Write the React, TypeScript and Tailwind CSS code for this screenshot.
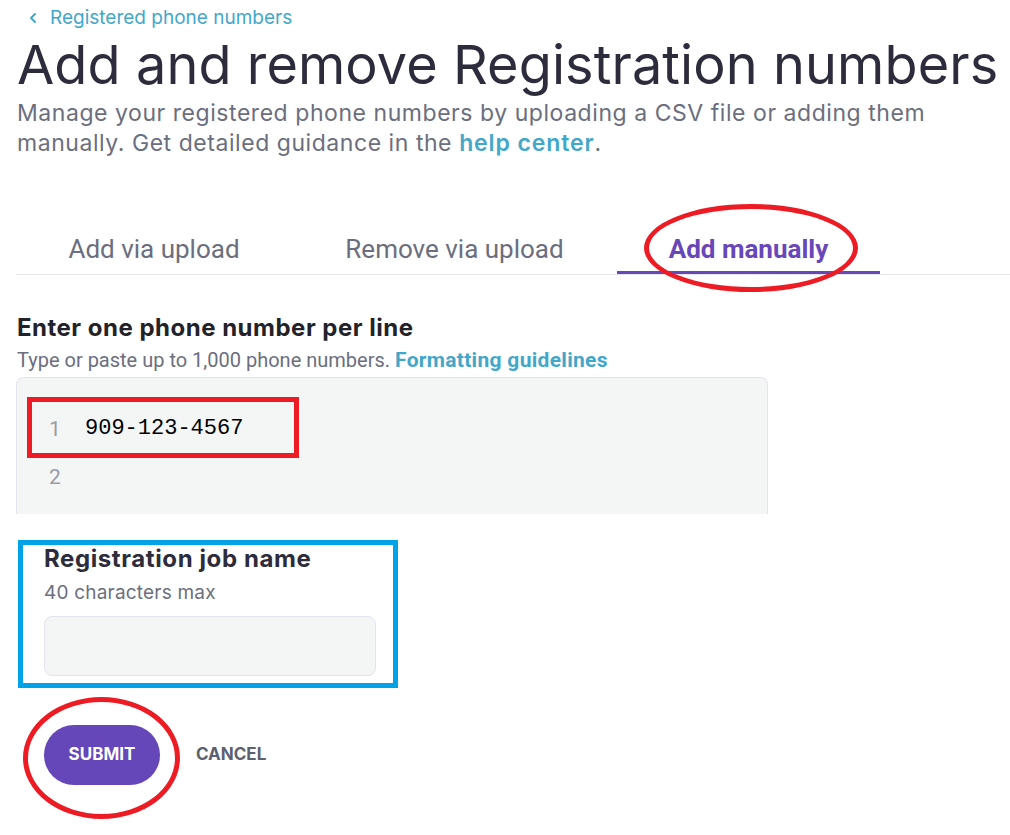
import { ChevronLeft } from "lucide-react";

const sans = "font-['Inter','Noto_Sans',sans-serif]";
const narrow = "font-['Roboto','Liberation_Sans',sans-serif]";

export default function App() {
  return (
    <div className={`relative w-[1010px] h-[835px] bg-white overflow-hidden ${sans}`}>
      <div className="pl-[17px] pt-[6px]">
        {/* breadcrumb */}
        <a className="flex items-center gap-[9px] text-[19px] leading-[24px] text-[#43a7c9]">
          <ChevronLeft className="w-[16px] h-[16px] ml-[8px]" strokeWidth={3} />
          <span>Registered phone numbers</span>
        </a>

        <h1 className="mt-[4px] text-[54px] leading-[62px] text-[#2c2c3c] tracking-[0.1px]">
          Add and remove Registration numbers
        </h1>
        <p className="mt-[2px] text-[23px] leading-[30px] text-[#6b6e7e] tracking-[0.55px]">
          Manage your registered phone numbers by uploading a CSV file or adding them
          <br />
          manually. Get detailed guidance in the{" "}
          <span className="font-semibold text-[#43a7c9] tracking-[0.9px]">help center</span>.
        </p>
      </div>

      {/* tabs */}
      <div className={`mt-[66px] ml-[16px] flex border-b border-[#e4e4ec] text-[26px] ${narrow}`}>
        <div className="w-[276px] h-[50px] flex items-center justify-center text-[#6b6e7e]">
          Add via upload
        </div>
        <div className="w-[325px] h-[50px] flex items-center justify-center text-[#6b6e7e]">
          Remove via upload
        </div>
        <div className="w-[263px] h-[50px] flex items-center justify-center font-bold text-[#6847b9] border-b-[3px] border-[#6847b9] -mb-px pt-[3px]">
          Add manually
        </div>
      </div>

      <div className="pl-[17px] pt-[39px]">
        <h2 className="text-[24px] leading-[28px] font-bold text-[#222228] tracking-[0.5px]">
          Enter one phone number per line
        </h2>
        <p className={`mt-[6px] text-[20px] leading-[24px] text-[#6b6e7e] ${narrow}`}>
          Type or paste up to 1,000 phone numbers.{" "}
          <span className="font-bold text-[#43a7c9] text-[21px] tracking-[0.3px]">Formatting guidelines</span>
        </p>

        <div className="mt-[5px] w-[752px] h-[137px] -ml-px bg-[#f4f5f5] border border-b-0 border-[#e2e3ec] rounded-t-[8px] pt-[27px] text-[22px] leading-[48px]">
          <div className="flex">
            <span className={`w-[68px] pl-[32px] text-[#9a9ca6] text-[21px] ${narrow}`}>1</span>
            <span className="text-black font-['Liberation_Mono',monospace]">909-123-4567</span>
          </div>
          <div className="flex">
            <span className={`w-[68px] pl-[32px] text-[#9a9ca6] text-[21px] ${narrow}`}>2</span>
          </div>
        </div>

        <div className="mt-[31px] pl-[27px]">
          <h3 className="text-[24px] leading-[28px] font-bold text-[#2c2c3c] tracking-[0.6px]">
            Registration job name
          </h3>
          <p className="mt-[8px] text-[19px] leading-[24px] text-[#6b6e7e] tracking-[0.2px]">40 characters max</p>
          <div className="mt-[11px] w-[332px] h-[60px] bg-[#f4f5f5] border border-[#e2e3ec] rounded-[8px]" />
        </div>

        <div className="mt-[49px] pl-[27px] flex items-center gap-[36px]">
          <button className="w-[116px] h-[60px] rounded-full bg-[#6547b9] text-white text-[17px] font-bold">
            SUBMIT
          </button>
          <button className="text-[17px] font-bold text-[#5c6070]">CANCEL</button>
        </div>
      </div>

      {/* annotations */}
      <div className="absolute left-[644px] top-[204px] w-[214px] h-[88px] rounded-[50%] border-[5px] border-[#ed1c24]" />
      <div className="absolute left-[27px] top-[397px] w-[272px] h-[61px] border-[5px] border-[#ed1c24]" />
      <div className="absolute left-[18px] top-[540px] w-[380px] h-[148px] border-[5px] border-[#00a2e8]" />
      <div className="absolute left-[23px] top-[697px] w-[157px] h-[122px] rounded-[50%] border-[5px] border-[#ed1c24]" />
    </div>
  );
}
